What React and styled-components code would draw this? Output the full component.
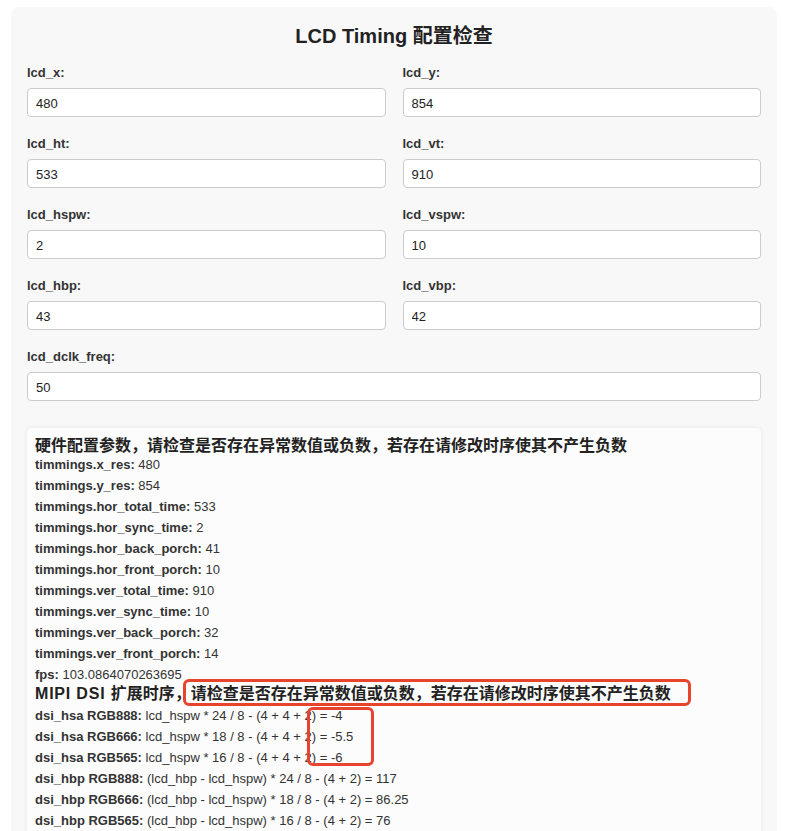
import React from "react";
import styled, { createGlobalStyle } from "styled-components";

const GlobalStyle = createGlobalStyle`
  html, body {
    margin: 0;
    padding: 0;
    background: #ffffff;
    overflow: hidden;
  }
  body {
    font-family: "Liberation Sans", "Noto Sans CJK SC", sans-serif;
    color: #333;
  }
`;

const Page = styled.div`
  position: relative;
  padding: 7px 21px 0 11px;
`;

const Card = styled.div`
  background: #f8f8f8;
  border-radius: 8px;
  padding: 17px 16px 20px;
`;

const Title = styled.h2`
  margin: 0 0 17px;
  font-size: 20px;
  line-height: 24px;
  text-align: center;
  color: #222;
  font-weight: bold;
`;

const FieldGrid = styled.div`
  display: grid;
  grid-template-columns: 1fr 1fr;
  column-gap: 17px;
`;

const Field = styled.div`
  grid-column: ${(p) => (p.$wide ? "1 / -1" : "auto")};
  margin-bottom: 19px;
`;

const Label = styled.label`
  display: block;
  font-size: 13px;
  line-height: 16px;
  font-weight: bold;
  color: #333;
  margin-bottom: 7px;
`;

const Input = styled.input`
  display: block;
  width: 100%;
  height: 29px;
  box-sizing: border-box;
  border: 1px solid #cccccc;
  border-radius: 4px;
  background: #fff;
  padding: 1px 8px 0;
  font-family: "Liberation Sans", sans-serif;
  font-size: 13px;
  color: #222;
  outline: none;
`;

const Result = styled.div`
  margin-top: 8px;
  background: #fcfcfc;
  border-radius: 4px;
  box-shadow: 0 0 4px rgba(0, 0, 0, 0.08);
  padding: 9px 8px 12px;
`;

const Heading = styled.div`
  font-size: 16px;
  line-height: 17px;
  font-weight: bold;
  color: #222;
  white-space: nowrap;
  margin-bottom: ${(p) => p.$gap}px;
`;

const Latin = styled.span`
  letter-spacing: 0.8px;
`;

const Line = styled.div`
  font-size: 13px;
  line-height: 21px;
  color: #333;
  white-space: nowrap;
`;

const Key = styled.b`
  font-weight: bold;
`;

const Mark = styled.div`
  position: absolute;
  border: 3px solid #e8432d;
  border-radius: 6px;
  box-sizing: border-box;
`;

const fields = [
  ["lcd_x", 480],
  ["lcd_y", 854],
  ["lcd_ht", 533],
  ["lcd_vt", 910],
  ["lcd_hspw", 2],
  ["lcd_vspw", 10],
  ["lcd_hbp", 43],
  ["lcd_vbp", 42],
];

const timings = [
  ["timmings.x_res", "480"],
  ["timmings.y_res", "854"],
  ["timmings.hor_total_time", "533"],
  ["timmings.hor_sync_time", "2"],
  ["timmings.hor_back_porch", "41"],
  ["timmings.hor_front_porch", "10"],
  ["timmings.ver_total_time", "910"],
  ["timmings.ver_sync_time", "10"],
  ["timmings.ver_back_porch", "32"],
  ["timmings.ver_front_porch", "14"],
  ["fps", "103.0864070263695"],
];

const dsi = [
  ["dsi_hsa RGB888", "lcd_hspw * 24 / 8 - (4 + 4 + 2) = -4"],
  ["dsi_hsa RGB666", "lcd_hspw * 18 / 8 - (4 + 4 + 2) = -5.5"],
  ["dsi_hsa RGB565", "lcd_hspw * 16 / 8 - (4 + 4 + 2) = -6"],
  ["dsi_hbp RGB888", "(lcd_hbp - lcd_hspw) * 24 / 8 - (4 + 2) = 117"],
  ["dsi_hbp RGB666", "(lcd_hbp - lcd_hspw) * 18 / 8 - (4 + 2) = 86.25"],
  ["dsi_hbp RGB565", "(lcd_hbp - lcd_hspw) * 16 / 8 - (4 + 2) = 76"],
];

export default function App() {
  return (
    <Page>
      <GlobalStyle />
      <Card>
        <Title>LCD Timing 配置检查</Title>
        <FieldGrid>
          {fields.map(([name, value]) => (
            <Field key={name}>
              <Label>{name}:</Label>
              <Input defaultValue={value} />
            </Field>
          ))}
          <Field $wide>
            <Label>lcd_dclk_freq:</Label>
            <Input defaultValue={50} />
          </Field>
        </FieldGrid>
        <Result>
          <Heading $gap={0}>
            硬件配置参数，请检查是否存在异常数值或负数，若存在请修改时序使其不产生负数
          </Heading>
          {timings.map(([k, v]) => (
            <Line key={k}>
              <Key>{k}:</Key> {v}
            </Line>
          ))}
          <Heading $gap={3}>
            <Latin>MIPI DSI </Latin>扩展时序，请检查是否存在异常数值或负数，若存在请修改时序使其不产生负数
          </Heading>
          {dsi.map(([k, v]) => (
            <Line key={k}>
              <Key>{k}:</Key> {v}
            </Line>
          ))}
        </Result>
      </Card>
      <Mark style={{ left: 183, top: 679, width: 508, height: 27 }} />
      <Mark style={{ left: 307, top: 707, width: 67, height: 59 }} />
    </Page>
  );
}
